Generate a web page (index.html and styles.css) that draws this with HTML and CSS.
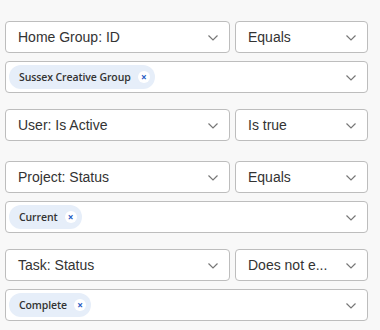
FILE: index.html
```html
<!DOCTYPE html>
<html lang="en">
<head>
  <meta charset="UTF-8">
  <title>Filters</title>
  <link rel="stylesheet" href="styles.css">
</head>
<body>
  <div class="filters">

    <div class="filter">
      <div class="filter-row">
        <div class="select field">Home Group: ID<span class="chev"></span></div>
        <div class="select op">Equals<span class="chev"></span></div>
        <span class="remove"></span>
      </div>
      <div class="select values">
        <span class="chip">Sussex Creative Group<span class="chip-x">×</span></span>
        <span class="chev"></span>
      </div>
    </div>

    <div class="filter single">
      <div class="filter-row">
        <div class="select field">User: Is Active<span class="chev"></span></div>
        <div class="select op">Is true<span class="chev"></span></div>
        <span class="remove"></span>
      </div>
    </div>

    <div class="filter">
      <div class="filter-row">
        <div class="select field">Project: Status<span class="chev"></span></div>
        <div class="select op">Equals<span class="chev"></span></div>
        <span class="remove"></span>
      </div>
      <div class="select values">
        <span class="chip">Current<span class="chip-x">×</span></span>
        <span class="chev"></span>
      </div>
    </div>

    <div class="filter">
      <div class="filter-row">
        <div class="select field">Task: Status<span class="chev"></span></div>
        <div class="select op">Does not e...<span class="chev"></span></div>
        <span class="remove"></span>
      </div>
      <div class="select values">
        <span class="chip">Complete<span class="chip-x">×</span></span>
        <span class="chev"></span>
      </div>
    </div>

  </div>
</body>
</html>
```

FILE: styles.css
```css
html, body {
  overflow: hidden;
}
body {
  margin: 0;
  padding: 21px 0 0 5px;
  background: #f8f8f8;
  font-family: "Liberation Sans", Arial, sans-serif;
  color: #333;
}
.filters {
  display: flex;
  flex-direction: column;
  gap: 16px;
}
.filter {
  display: flex;
  flex-direction: column;
  gap: 8px;
}
.filter.single {
  padding-bottom: 4px;
}
.filter-row {
  display: flex;
  gap: 5px;
  align-items: center;
}
.select {
  box-sizing: border-box;
  flex: none;
  height: 32px;
  background: #fff;
  border: 1px solid #bdbdbd;
  border-radius: 4px;
  display: flex;
  align-items: center;
  padding: 0 0 0 12px;
  font-size: 14px;
  white-space: nowrap;
  position: relative;
}
.select.field {
  width: 225px;
}
.select.op {
  width: 133px;
}
.select.values {
  width: 363px;
  padding-left: 3px;
}
.chev {
  position: absolute;
  right: 11px;
  top: 13px;
  width: 10px;
  height: 6px;
  background: url("data:image/svg+xml,%3Csvg xmlns='http://www.w3.org/2000/svg' width='10' height='6'%3E%3Cpolyline points='0.5,0.5 5,5 9.5,0.5' fill='none' stroke='%23777' stroke-width='1.2'/%3E%3C/svg%3E") no-repeat;
}
.chip {
  display: inline-flex;
  align-items: center;
  height: 24px;
  padding: 0 5px 0 10px;
  border-radius: 12px;
  background: #e6eef9;
  font-family: "Open Sans", sans-serif;
  font-weight: 600;
  font-size: 10.5px;
  letter-spacing: -0.1px;
  color: #333;
}
.chip-x {
  width: 12px;
  height: 12px;
  margin-left: 7px;
  border-radius: 50%;
  background: #fff;
  color: #1f5bc4;
  font-weight: 700;
  font-size: 10px;
  line-height: 12px;
  text-align: center;
}
.remove {
  margin-left: 9px;
  width: 12px;
  height: 14px;
  flex: none;
  background: url("data:image/svg+xml,%3Csvg xmlns='http://www.w3.org/2000/svg' width='12' height='14'%3E%3Cpath d='M0 2.5h12M4 2.5V1h4v1.5M2 2.5l1 11h6l1-11' fill='none' stroke='%23444' stroke-width='1.2'/%3E%3C/svg%3E") no-repeat;
}
```
